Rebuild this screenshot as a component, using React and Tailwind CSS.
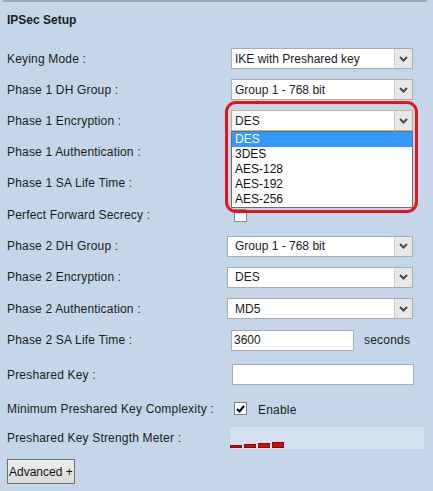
import React from "react";

function Chevron() {
  return (
    <svg width="9" height="6" viewBox="0 0 9 6">
      <path d="M1 1 L4.5 4.5 L8 1" fill="none" stroke="#4a4a4a" strokeWidth="2" />
    </svg>
  );
}

function Select({ value, className, focused, children }) {
  return (
    <div
      className={`relative h-[21px] flex bg-white border ${
        focused ? "border-[#c7b18a]" : "border-[#a5acb2]"
      } ${className}`}
    >
      <div className="flex-1 flex items-center pl-[3px] leading-none whitespace-nowrap">{value}</div>
      <div
        className={`w-[18px] h-full flex items-center justify-center bg-[#e8e8e8] border-l ${
          focused ? "border-[#d6c7a8]" : "border-[#cfcfcf]"
        }`}
      >
        <Chevron />
      </div>
      {children}
    </div>
  );
}

function Row({ h, label, children }) {
  return (
    <div className={`flex items-center ${h}`}>
      <div className="w-[232px] shrink-0 pl-[7px] whitespace-nowrap tracking-[0.18px]">{label}</div>
      <div className="flex items-center">{children}</div>
    </div>
  );
}

function Input({ value, className }) {
  return (
    <div className={`h-[21px] bg-white border border-[#a5acb2] flex items-center pl-[2px] ${className}`}>
      {value}
    </div>
  );
}

export default function App() {
  const items = ["DES", "3DES", "AES-128", "AES-192", "AES-256"];
  return (
    <div className="relative w-[433px] h-[491px] overflow-hidden bg-[#c4d6e7] font-['Liberation_Sans',Arial,sans-serif] text-[12px] text-[#1c1c1c]">
      <div className="ml-[3px] w-[424px] h-[2px] bg-[#9aa5b0]" />
      <div className="h-[36px] flex items-center pl-[7px] font-bold">IPSec Setup</div>
      <div className="mt-[5px] flex flex-col">
        <Row h="h-[31px]" label="Keying Mode :">
          <Select className="w-[182px] -ml-[1px]" value="IKE with Preshared key" />
        </Row>
        <Row h="h-[31px]" label="Phase 1 DH Group :">
          <Select className="w-[182px] -ml-[1px]" value="Group 1 - 768 bit" />
        </Row>
        <Row h="h-[31px]" label="Phase 1 Encryption :">
          <Select className="w-[182px] -ml-[1px] z-10" value="DES" focused>
            <div className="absolute left-[-1px] right-[-1px] top-[20px] border border-[#6e6e6e] bg-white">
              {items.map((it, i) => (
                <div
                  key={it}
                  className={`h-[15px] leading-[15px] pl-[3px] ${
                    i === 0 ? "bg-[#3399ff] text-white" : "text-[#111]"
                  }`}
                >
                  {it}
                </div>
              ))}
            </div>
          </Select>
        </Row>
        <Row h="h-[31px]" label="Phase 1 Authentication :" />
        <Row h="h-[32px]" label="Phase 1 SA Life Time :" />
        <Row h="h-[32px]" label="Perfect Forward Secrecy :">
          <div className="ml-[2px] w-[13px] h-[13px] bg-white border border-[#8a8a8a] relative z-20" />
        </Row>
        <Row h="h-[30px]" label="Phase 2 DH Group :">
          <Select className="w-[186px] -ml-[5px]" value={<span className="pl-[4px]">Group 1 - 768 bit</span>} />
        </Row>
        <Row h="h-[32px]" label="Phase 2 Encryption :">
          <Select className="w-[186px] -ml-[5px]" value={<span className="pl-[4px]">DES</span>} />
        </Row>
        <Row h="h-[31px]" label="Phase 2 Authentication :">
          <Select className="w-[186px] -ml-[5px]" value={<span className="pl-[4px]">MD5</span>} />
        </Row>
        <Row h="h-[32px]" label="Phase 2 SA Life Time :">
          <Input className="w-[123px] -ml-[1px]" value="3600" />
          <span className="ml-[10px] tracking-[0.2px]">seconds</span>
        </Row>
        <Row h="h-[37px]" label="Preshared Key :">
          <Input className="w-[182px]" value="" />
        </Row>
        <Row h="h-[31px]" label="Minimum Preshared Key Complexity :">
          <div className="ml-[2px] w-[13px] h-[13px] bg-white border border-[#7a7a7a] flex items-center justify-center">
            <svg width="9" height="8" viewBox="0 0 9 8">
              <path d="M1 4 L3.5 6.5 L8 1" fill="none" stroke="#000" strokeWidth="2" />
            </svg>
          </div>
          <span className="ml-[11px] mt-[2px] tracking-[0.2px]">Enable</span>
        </Row>
        <Row h="h-[28px]" label="Preshared Key Strength Meter :">
          <div className="-ml-[2px] w-[194px] h-[22px] bg-[#d5e1ee] flex items-end gap-[2px] pb-[1px]">
            <div className="w-[12px] h-[3px] bg-[#cc1111] border border-[#8a0a0a]" />
            <div className="w-[12px] h-[4px] bg-[#cc1111] border border-[#8a0a0a]" />
            <div className="w-[12px] h-[5px] bg-[#cc1111] border border-[#8a0a0a]" />
            <div className="w-[12px] h-[6px] bg-[#cc1111] border border-[#8a0a0a]" />
          </div>
        </Row>
      </div>
      <div className="pl-[7px] mt-[7px]">
        <button className="w-[68px] h-[25px] border border-[#707070] bg-gradient-to-b from-[#f0f0f0] to-[#d9d9d9] text-left pl-[1px] text-[12px] text-[#111] leading-none">
          Advanced +
        </button>
      </div>
      <div className="absolute left-[225px] top-[101px] w-[193px] h-[112px] border-[3px] border-[#e3141b] rounded-[11px] z-30 pointer-events-none" />
    </div>
  );
}
